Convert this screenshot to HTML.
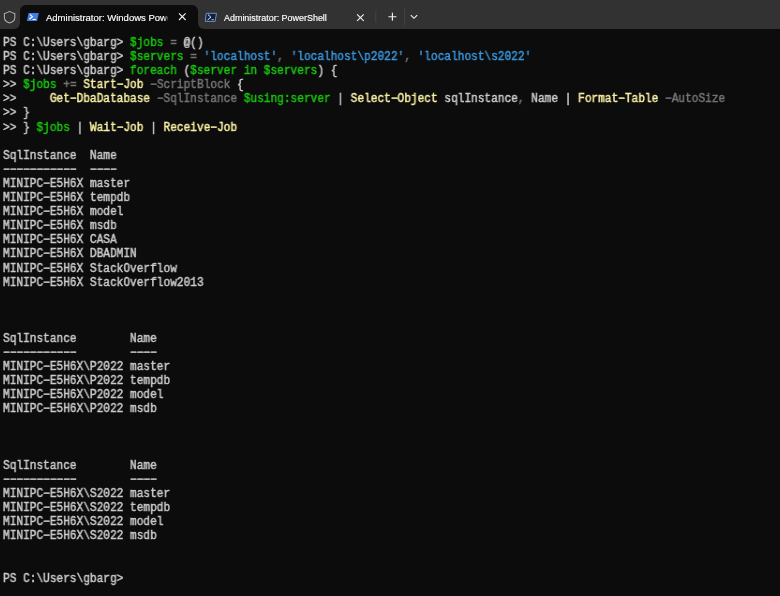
<!DOCTYPE html>
<html><head><meta charset="utf-8">
<style>
*{margin:0;padding:0;box-sizing:border-box}
html,body{width:780px;height:596px;overflow:hidden;background:#0c0c0c}
body{position:relative;font-family:"Liberation Sans",sans-serif}
#wrap{position:absolute;left:0;top:0;width:780px;height:596px;filter:blur(0.3px)}
#bar{position:absolute;left:0;top:0;width:780px;height:29px;background:#323232}
#tab1{position:absolute;left:20px;top:5px;width:178px;height:24px;background:#0c0c0c;border-radius:6px 6px 0 0}
.ear{position:absolute;top:23px;width:6px;height:6px;background:#0c0c0c}
.ear::after{content:"";position:absolute;left:0;top:0;width:6px;height:6px;background:#323232}
#earL{left:14px}
#earL::after{border-radius:0 0 6px 0}
#earR{left:198px}
#earR::after{border-radius:0 0 0 6px}
.ttl{position:absolute;color:#ffffff;font-size:9.5px;white-space:nowrap;line-height:12px;will-change:transform;-webkit-text-stroke:0.15px currentColor}
svg{position:absolute;overflow:visible}
#term{position:absolute;left:3px;top:36px;will-change:transform;font-family:"Liberation Mono",monospace;font-size:11.9px;line-height:14.1px;transform:scaleX(0.937);transform-origin:0 0;color:#cccccc;white-space:pre;-webkit-text-stroke:0.45px currentColor}
.g{color:#16c60c}.y{color:#f9f1a5}.d{color:#767676}.c{color:#3a96dd}
</style></head><body><div id="wrap">
<div id="bar"></div>
<div id="tab1"></div>
<div class="ear" id="earL"></div>
<div class="ear" id="earR"></div>
<!-- shield -->
<svg style="left:0;top:0" width="20" height="29"><path d="M9.6 11.4 C11.3 12.5 13 13.1 14.8 13.4 L14.8 17.6 C14.8 20.2 12.8 22.1 9.6 22.9 C6.4 22.1 4.4 20.2 4.4 17.6 L4.4 13.4 C6.2 13.1 7.9 12.5 9.6 11.4 Z" fill="none" stroke="#b0b0b0" stroke-width="1.05"/></svg>
<!-- ps icon active -->
<svg style="left:0;top:0" width="45" height="29"><path d="M28.6 12.9 L38.8 12.9 L37.1 20.9 L26.9 20.9 Z" fill="#3d7fe4"/><path d="M29.8 14.4 L32.5 16.7 L29.3 19.3" fill="none" stroke="#fff" stroke-width="1.1"/><path d="M32.6 19.5 L35.8 19.5" stroke="#fff" stroke-width="1.1"/></svg>
<div class="ttl" id="t1" style="left:46px;top:12px;width:122px;overflow:hidden;-webkit-mask-image:linear-gradient(90deg,#000 0,#000 118px,rgba(0,0,0,.3) 122px)">Administrator: Windows PowerShell</div>
<svg style="left:0;top:0" width="200" height="29"><path d="M179 13.4 L185.6 20 M185.6 13.4 L179 20" stroke="#f0f0f0" stroke-width="1.15"/></svg>
<!-- tab2 -->
<svg style="left:0;top:0" width="230" height="29"><path d="M206.3 13.3 L216.5 13.3 L215.1 21.4 L205.3 21.4 Z" fill="#0d2244" stroke="#7f9cc4" stroke-width="0.9"/><path d="M208 14.6 L210.9 17.2 L207.6 19.9" fill="none" stroke="#f4f4f4" stroke-width="1"/><path d="M211.5 19.7 L213.8 19.7" stroke="#d8d8d8" stroke-width="0.9"/></svg>
<div class="ttl" id="t2" style="left:224px;top:12px;font-size:8.95px">Administrator: PowerShell</div>
<svg style="left:0;top:0" width="430" height="29"><path d="M357.1 14.3 L363.7 20.9 M363.7 14.3 L357.1 20.9" stroke="#f0f0f0" stroke-width="1.15"/>
<path d="M375.8 11 L375.8 22.4" stroke="#444" stroke-width="1"/>
<path d="M388.4 16.7 L396.4 16.7 M392.4 12.7 L392.4 20.7" stroke="#f0f0f0" stroke-width="1.15"/>
<path d="M404.4 8.3 L404.4 25" stroke="#444" stroke-width="1"/>
<path d="M410.8 15.1 L414 18.3 L417.2 15.1" fill="none" stroke="#f0f0f0" stroke-width="1.15"/></svg>
<div id="term">PS C:\Users\gbarg&gt; <span class="g">$jobs</span> <span class="d">=</span> @()
PS C:\Users\gbarg&gt; <span class="g">$servers</span> <span class="d">=</span> <span class="c">'localhost'</span><span class="d">,</span> <span class="c">'localhost\p2022'</span><span class="d">,</span> <span class="c">'localhost\s2022'</span>
PS C:\Users\gbarg&gt; <span class="g">foreach</span> (<span class="g">$server</span> <span class="g">in</span> <span class="g">$servers</span>) {
&gt;&gt; <span class="g">$jobs</span> <span class="d">+=</span> <span class="y">Start−Job</span> <span class="d">−ScriptBlock</span> {
&gt;&gt;     <span class="y">Get−DbaDatabase</span> <span class="d">−SqlInstance</span> <span class="g">$using:server</span> | <span class="y">Select−Object</span> sqlInstance<span class="d">,</span> Name | <span class="y">Format−Table</span> <span class="d">−AutoSize</span>
&gt;&gt; }
&gt;&gt; } <span class="g">$jobs</span> | <span class="y">Wait−Job</span> | <span class="y">Receive−Job</span>

SqlInstance  Name
−−−−−−−−−−−  −−−−
MINIPC−E5H6X master
MINIPC−E5H6X tempdb
MINIPC−E5H6X model
MINIPC−E5H6X msdb
MINIPC−E5H6X CASA
MINIPC−E5H6X DBADMIN
MINIPC−E5H6X StackOverflow
MINIPC−E5H6X StackOverflow2013



SqlInstance        Name
−−−−−−−−−−−        −−−−
MINIPC−E5H6X\P2022 master
MINIPC−E5H6X\P2022 tempdb
MINIPC−E5H6X\P2022 model
MINIPC−E5H6X\P2022 msdb



SqlInstance        Name
−−−−−−−−−−−        −−−−
MINIPC−E5H6X\S2022 master
MINIPC−E5H6X\S2022 tempdb
MINIPC−E5H6X\S2022 model
MINIPC−E5H6X\S2022 msdb


PS C:\Users\gbarg&gt;</div>
</div></body></html>
